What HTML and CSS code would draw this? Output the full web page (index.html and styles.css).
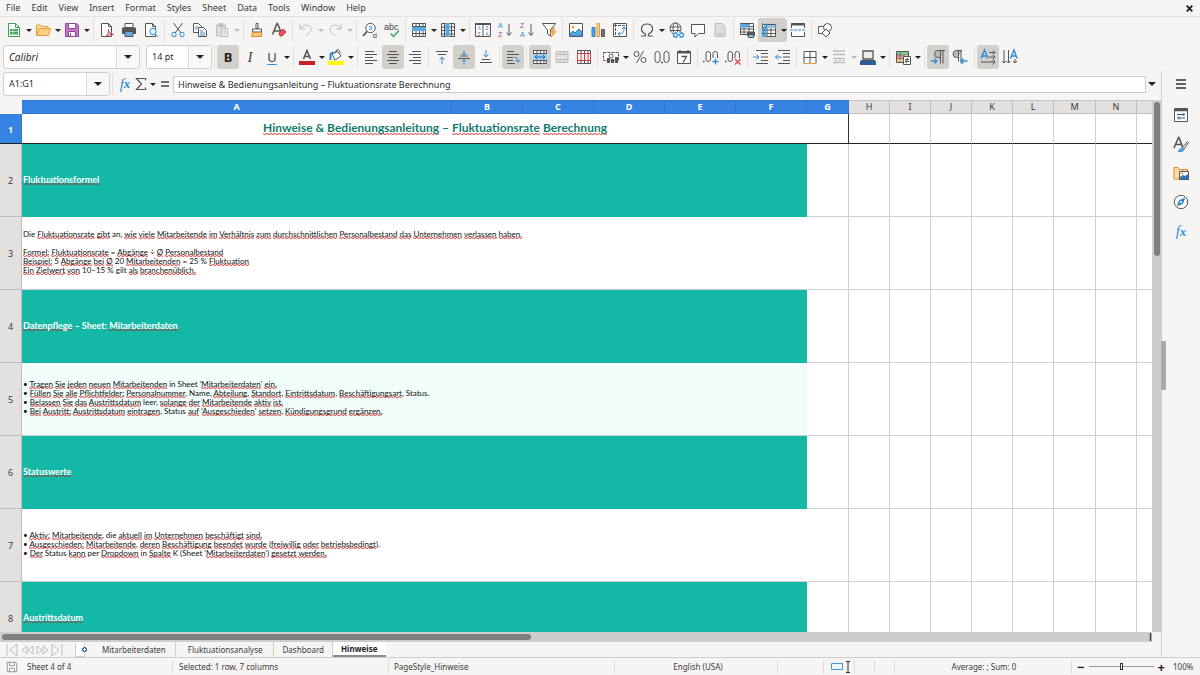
FILE: index.html
```html
<!DOCTYPE html>
<html lang="en">
<head>
<meta charset="utf-8">
<title>Hinweise – Spreadsheet</title>
<link rel="stylesheet" href="styles.css">
</head>
<body>
<header class="chrome">
  <nav class="menubar" aria-label="Menu bar">
    <button>File</button><button>Edit</button><button>View</button><button>Insert</button><button>Format</button><button>Styles</button><button>Sheet</button><button>Data</button><button>Tools</button><button>Window</button><button>Help</button>
    <button class="close" aria-label="Close document"><svg class="x" viewBox="0 0 8 8"><path d="M1.5 1.5l5 5m0-5l-5 5" stroke="#222" stroke-width="1.7"/></svg></button>
  </nav>
  <div class="toolbar" role="toolbar" aria-label="Standard">
    <button class="tool" aria-label="New"><svg viewBox="0 0 16 16"><path d="M2.500 1.500h7l4 4v9h-11z" class="w" stroke="#3a9d55"/><path d="M9.500 1.500v4h4" stroke="#3a9d55"/><rect x="4" y="7" width="8" height="5.500" fill="#42a85c"/><path d="M4 9.500h8M7 7v5.500" stroke="#fff" stroke-width=".6"/></svg></button><button class="drop" aria-label="New options"></button>
    <button class="tool" aria-label="Open"><svg viewBox="0 0 16 16"><path d="M1.500 13V3h4l1.500 1.500h6V6" fill="#fbe0a8" stroke="#e59a3c"/><path d="M1.500 13.500L4 6.500h11.500l-2 7z" fill="#fdcf85" stroke="#e59a3c"/></svg></button><button class="drop" aria-label="Open options"></button>
    <button class="tool" aria-label="Save"><svg viewBox="0 0 16 16"><path d="M1.500 1.500h11l2 2v11h-13z" fill="#c678cd" stroke="#93469f"/><path d="M4.500 1.500h7v5h-7zM4.500 9.500h7v5h-7z" class="w" stroke="#93469f"/><path d="M6.500 11v3" stroke="#93469f"/></svg></button><button class="drop" aria-label="Save options"></button>
    <span class="sep after"></span>
    <button class="tool" aria-label="Export as PDF"><svg viewBox="0 0 16 16"><path d="M2.500 1.500h7l3 3v10h-10z" class="w g"/><path d="M9.500 1.500v3h3" class="g"/><path d="M7 14.500c2-2 3-5 2.500-7 0 3 2 5 5 5-3-.5-5 .5-7.500 2z" stroke="#d73545" fill="#fff"/></svg></button>
    <button class="tool" aria-label="Print"><svg viewBox="0 0 16 16"><path d="M4 1.500h8v4H4z" class="w g"/><path d="M1 5.500h14v6.500H1z" fill="#555"/><path d="M4 9.500h8v5H4z" fill="#65a9df" stroke="#555"/></svg></button>
    <button class="tool" aria-label="Print Preview"><svg viewBox="0 0 16 16"><path d="M2.500 1.500h7l3 3v10h-10z" class="w g"/><path d="M9.500 1.500v3h3" class="g"/><circle cx="10" cy="9.500" r="3.200" fill="#e8f3fb" class="b"/><path d="M12 12l3 3" class="b"/></svg></button>
    <span class="sep"></span>
    <button class="tool" aria-label="Cut"><svg viewBox="0 0 16 16"><path d="M3.500 1l7.500 10M12.500 1L5 11" class="g"/><circle cx="4" cy="12.500" r="2.200" class="b"/><circle cx="12" cy="12.500" r="2.200" class="b"/></svg></button>
    <button class="tool" aria-label="Copy"><svg viewBox="0 0 16 16"><path d="M1.500 1.500h5l3 3v6h-8z" class="w g"/><path d="M6.500 5.500h5l3 3v6h-8z" class="w g"/><path d="M3 5h3M3 7h2M8 9h3M8 11h5M8 13h5" class="b"/></svg></button>
    <button class="tool" aria-label="Paste"><svg viewBox="0 0 16 16"><path d="M2.500 3h9v11h-9z" fill="#ddd" class="l"/><path d="M5 1.500h4v3H5z" fill="#bbb" class="l"/><path d="M7.500 6.500h6v8h-6z" fill="#eee" class="l"/><path d="M9 9h3M9 11h3" class="l"/></svg></button><button class="drop off" aria-label="Paste options"></button>
    <span class="sep after"></span>
    <button class="tool" aria-label="Clone Formatting"><svg viewBox="0 0 16 16"><path d="M7 1.500h2v5H7zM3.500 7h9v3h-9z" class="w g"/><path d="M3.500 10.500h9v4h-10z" fill="#fbc684" stroke="#e58a2c"/></svg></button>
    <button class="tool" aria-label="Clear Direct Formatting"><svg viewBox="0 0 16 16"><path d="M1.500 12.500l4.500-11h.5l4.500 11M3 9h6" class="g" stroke-width="1.500"/><path d="M8 11l4-4 3 3-4 4H9z" fill="#e9545f" stroke="#d73545"/></svg></button>
    <span class="sep"></span>
    <button class="tool" aria-label="Undo"><svg viewBox="0 0 16 16"><path d="M2 2v5h5M2.500 6.500C5 2 12 2 13 6.500c.5 3-3 5.500-5.500 7.500" class="l"/></svg></button><button class="drop off" aria-label="Undo list"></button>
    <button class="tool" aria-label="Redo"><svg viewBox="0 0 16 16"><path d="M14 2v5H9M13.500 6.500C11 2 4 2 3 6.500c-.5 3 3 5.500 5.500 7.500" class="l"/></svg></button><button class="drop off" aria-label="Redo list"></button>
    <span class="sep after"></span>
    <button class="tool" aria-label="Find and Replace"><svg viewBox="0 0 16 16"><circle cx="8.500" cy="6" r="4.700" class="w g"/><path d="M5 9.500L1 14" class="g" stroke-width="1.800"/><text x="6.500" y="7.500" class="tb" font-size="7">a</text><text x="10.500" y="15.500" class="tg" font-size="8">d</text></svg></button>
    <button class="tool" aria-label="Spelling"><svg viewBox="0 0 16 16"><text x="0" y="7.500" class="tg" font-size="9">abc</text><path d="M6.500 11.500l3 3 5.500-6" stroke="#35a85a" stroke-width="1.500"/></svg></button>
    <span class="sep"></span>
    <button class="tool" aria-label="Row"><svg viewBox="0 0 16 16"><path d="M1.500 1.500h13v13h-13zM1.500 4.500h13M1.500 11.500h13M5 1.500v13M8.500 1.500v13M12 1.500v13" class="w g"/><path d="M1 5h14v4H1z" fill="#5ba8e0"/></svg></button><button class="drop" aria-label="Row options"></button>
    <button class="tool" aria-label="Column"><svg viewBox="0 0 16 16"><path d="M1.500 1.500h13v13h-13zM4.500 1.500v13M11.500 1.500v13M1.500 5h13M1.500 8.500h13M1.500 12h13" class="w g"/><path d="M5.500 1h4v14h-4z" fill="#5ba8e0"/></svg></button><button class="drop" aria-label="Column options"></button>
    <span class="sep after"></span>
    <button class="tool" aria-label="Sort"><svg viewBox="0 0 16 16"><path d="M.5 1.500h15v13H.5zM8 3v12" class="w g"/><path d="M0 1h16v2H0z" fill="#555"/><text x="2.500" y="8" class="tb" font-size="5">A</text><text x="2.500" y="14" class="tp" font-size="5">Z</text><text x="10.500" y="8" class="tp" font-size="5">Z</text><text x="10.500" y="14" class="tb" font-size="5">A</text></svg></button>
    <button class="tool" aria-label="Sort Ascending"><svg viewBox="0 0 16 16"><text x="1" y="6" class="tb" font-size="7">A</text><text x="1" y="15" class="tp" font-size="7">Z</text><path d="M12 2v11M9.500 10.500L12 13.500l2.500-3" class="g"/></svg></button>
    <button class="tool" aria-label="Sort Descending"><svg viewBox="0 0 16 16"><text x="1" y="6" class="tp" font-size="7">Z</text><text x="1" y="15" class="tb" font-size="7">A</text><path d="M12 2v11M9.500 10.500L12 13.500l2.500-3" class="g"/></svg></button>
    <button class="tool" aria-label="AutoFilter"><svg viewBox="0 0 16 16"><path d="M1.500 1.500h13L9.500 8v6l-3-2V8z" class="w g"/><path d="M12 6l-3 5h3l-2 4.500 5-6h-3l2-3.500z" fill="#fbb45c" stroke="#e58a2c" stroke-width=".6"/></svg></button>
    <span class="sep"></span>
    <button class="tool" aria-label="Insert Image"><svg viewBox="0 0 16 16"><path d="M1.500 1.500h13v13h-13z" class="w g"/><circle cx="5" cy="5" r="1.500" fill="#f6a546"/><path d="M2 14v-2l3-3 2 2 4-4 3 3v4z" fill="#5ba8e0" stroke="#2b78bd"/></svg></button>
    <button class="tool" aria-label="Insert Chart"><svg viewBox="0 0 16 16"><path d="M2 5.500h3v9H2z" fill="#5ba8e0" stroke="#2b78bd"/><path d="M7 1.500h2.500v13H7z" fill="#fdcf85" stroke="#e59a3c"/><path d="M11.500 7.500h3v7h-3z" fill="#777" class="g"/></svg></button>
    <button class="tool" aria-label="Insert Pivot Table"><svg viewBox="0 0 16 16"><path d="M1.500 1.500h13v13h-13z" class="w g"/><path d="M2 3.500h12M3.500 2v12" class="g" stroke-dasharray="3 1"/><path d="M6 12c5 0 6-2 6-6M10 7l2-2 2 2M8 10l-2 2 2 2" class="b"/></svg></button>
    <span class="sep"></span>
    <button class="tool" aria-label="Special Character"><svg viewBox="0 0 16 16"><path d="M2 14h4.500v-2C0 9 2 2 8 2s8 7 1.500 10v2H14" class="g" stroke-width="1.200"/></svg></button><button class="drop" aria-label="Recent characters"></button>
    <button class="tool" aria-label="Hyperlink"><svg viewBox="0 0 16 16"><circle cx="7.500" cy="6.500" r="5.500" class="w g"/><ellipse cx="7.500" cy="6.500" rx="2.500" ry="5.500" class="g"/><path d="M2 5h11M2 8.500h11" class="g"/><path d="M5 10h11v6H5z" fill="#f6f5f4"/><path d="M9.500 11h-2a2 2 0 0 0 0 4h2M11.500 11h2a2 2 0 0 1 0 4h-2M8.500 13h4" class="b" stroke-width="1.300"/></svg></button>
    <button class="tool" aria-label="Comment"><svg viewBox="0 0 16 16"><path d="M1.500 2.500h13v9h-6L5 15v-3.500H1.500z" class="w g"/></svg></button>
    <button class="tool" aria-label="Headers and Footers"><svg viewBox="0 0 16 16"><path d="M3 1.500h7l3 3v10H3z" fill="#ddd" class="l"/><path d="M5 12h6" class="l"/></svg></button>
    <span class="sep"></span>
    <button class="tool" aria-label="Define Print Area"><svg viewBox="0 0 16 16"><path d="M1.500 1.500h13v11h-13zM1.500 4.500h13M1.500 7h13M1.500 10h13M5 1.500v11M10 1.500v11" class="w g"/><path d="M1 2h10v3.500H1z" fill="#5ba8e0"/><path d="M8 10h8v4H8z" fill="#555"/><path d="M9.500 12.500h5v3h-5z" fill="#8cc3ec" class="g"/></svg></button>
    <span class="pair"><button class="tool" aria-label="Freeze Rows and Columns" aria-pressed="true"><svg viewBox="0 0 16 16"><path d="M1.500 2.500h13v12h-13zM6 4.500v10M10 4.500v10M1.500 8h13M1.500 11.500h13" class="w g"/><path d="M5 3h9.500v3H5z" fill="#8cc3ec"/><path d="M1 6h4v9H1z" fill="#5ba8e0"/><path d="M1 1l4.500 4.500M5.500 1.500v4h-4" class="b"/><path d="M1 8h3M1 11.500h3" class="d"/></svg></button><button class="drop" aria-label="Freeze options"></button></span>
    <button class="tool" aria-label="Split Window"><svg viewBox="0 0 16 16"><path d="M1.500 6V1.500h13V6M1.500 10v4.500h13V10" class="w g"/><path d="M1 2.500h14" class="g" stroke-width="2"/><path d="M0 8h16" class="b" stroke-dasharray="3 1"/></svg></button>
    <span class="sep"></span>
    <button class="tool" aria-label="Show Draw Functions"><svg viewBox="0 0 16 16"><path d="M1.500 4.500h7v7h-7z" class="w g"/><circle cx="10.500" cy="5.500" r="4" class="w g"/><path d="M9 7l4 4-4 4-4-4z" class="w g"/></svg></button>
  </div>
  <div class="toolbar" role="toolbar" aria-label="Formatting">
    <span class="combo font"><input class="italic" aria-label="Font Name" value="Calibri"><button aria-label="Font list"></button></span>
    <span class="combo size"><input aria-label="Font Size" value="14 pt"><button aria-label="Size list"></button></span>
    <span class="sep"></span>
    <button class="tool glyph bold" aria-pressed="true">B</button><button class="tool glyph it">I</button><button class="tool glyph un">U</button><button class="drop" aria-label="Underline styles"></button>
    <span class="sep after"></span>
    <button class="tool" aria-label="Font Color"><svg viewBox="0 0 16 16"><path d="M4.500 10L8 1.500 11.500 10M5.500 7.500h5" class="g" stroke-width="1.600"/><path d="M0 12h16v4H0z" fill="#c9211e"/></svg></button><button class="drop" aria-label="Font colors"></button>
    <button class="tool" aria-label="Background Color"><svg viewBox="0 0 16 16"><path d="M4 5l5-3 4 5-6 4z" class="w g"/><path d="M8 4V1.500c3-2 4 0 4 3" class="g"/><path d="M2.500 11V5c1-2 3-1 4-1" class="b" stroke-width="2"/><path d="M0 12h16v4H0z" fill="#ffff00"/></svg></button><button class="drop" aria-label="Background colors"></button>
    <span class="sep after"></span>
    <button class="tool" aria-label="Align Left"><svg viewBox="0 0 16 16"><path d="M2 2.500h9M2 5.500h12M2 8.500h8M2 11.500h12M2 14.500h8" class="g"/></svg></button>
    <button class="tool" aria-label="Center Horizontally" aria-pressed="true"><svg viewBox="0 0 16 16"><path d="M4 2.500h8M2 5.500h12M4 8.500h8M2 11.500h12M4 14.500h8" class="g"/></svg></button>
    <button class="tool" aria-label="Align Right"><svg viewBox="0 0 16 16"><path d="M5 2.500h9M2 5.500h12M6 8.500h8M2 11.500h12M6 14.500h8" class="g"/></svg></button>
    <span class="sep"></span>
    <button class="tool" aria-label="Align Top"><svg viewBox="0 0 16 16"><path d="M2 2.500h12M4 5.500h8" class="g"/><path d="M8 15V8M5.500 10.500L8 8l2.500 2.500" class="b"/></svg></button>
    <button class="tool" aria-label="Center Vertically" aria-pressed="true"><svg viewBox="0 0 16 16"><path d="M4 7h8M2 9.500h12" class="g"/><path d="M8 1v5M6 4l2 2 2-2M8 15.500v-5M6 12.500l2-2 2 2" class="b"/></svg></button>
    <button class="tool" aria-label="Align Bottom"><svg viewBox="0 0 16 16"><path d="M4 10.500h8M2 13.500h12" class="g"/><path d="M8 1v7M5.500 5.500L8 8l2.500-2.500" class="b"/></svg></button>
    <span class="sep"></span>
    <button class="tool" aria-label="Wrap Text" aria-pressed="true"><svg viewBox="0 0 16 16"><path d="M2 2.500h7M2 5.500h12M2 8.500h6M2 11.500h6M2 14.500h8" class="g"/><path d="M9 8.500c3 0 4 1 4 4M10.500 11l2.500 2.500 2-2.500" class="b"/></svg></button>
    <span class="sep"></span>
    <button class="tool" aria-label="Merge and Center Cells" aria-pressed="true"><svg viewBox="0 0 16 16"><path d="M1.500 1.500h13v13h-13zM1.500 4.500h13M1.500 11.500h13M5 1.500v3M8.500 1.500v3M12 1.500v3M5 11.500v3M8.500 11.500v3M12 11.500v3" class="w g"/><path d="M1 5h14v6H1z" fill="#9ccbee"/><path d="M3 8h10M5 6L3 8l2 2M11 6l2 2-2 2" class="d"/></svg></button>
    <button class="tool" aria-label="Merge Cells" disabled><svg viewBox="0 0 16 16"><path d="M2 2.500h12v11H2zM2 5.500h12M2 10.500h12M6 2.500v3M10 2.500v3M6 10.500v3M10 10.500v3" fill="#e4e4e3" class="l"/></svg></button>
    <button class="tool" aria-label="Unmerge Cells"><svg viewBox="0 0 16 16"><path d="M1.500 1.500h13v13h-13zM5 1.500v3M8.500 1.500v3M12 1.500v3M5 11.500v3M8.500 11.500v3M12 11.500v3" class="w g"/><path d="M1.500 4.500h13v7h-13zM5 4.500v7M8.500 4.500v7M12 4.500v7" stroke="#d73545"/></svg></button>
    <span class="sep"></span>
    <button class="tool" aria-label="Format as Currency"><svg viewBox="0 0 16 16"><path d="M.5 3.500h15v8H.5z" class="w g" stroke-dasharray="3 1"/><circle cx="8" cy="7" r="2" class="g"/><path d="M4 9h3v5H4zM8 10h3v4H8zM12 8h3v6h-3z" fill="#555"/></svg></button><button class="drop" aria-label="Currency list"></button>
    <button class="tool" aria-label="Format as Percent"><svg viewBox="0 0 16 16"><circle cx="4.500" cy="5" r="2.500" class="g"/><circle cx="11.500" cy="11" r="2.500" class="g"/><path d="M11.500 2L4.500 14" class="g"/></svg></button>
    <button class="tool" aria-label="Format as Number"><svg viewBox="0 0 16 16"><rect x="1" y="2.500" width="5" height="11" rx="2.500" class="g"/><rect x="10" y="2.500" width="5" height="11" rx="2.500" class="g"/><path d="M7.500 13h1v1h-1z" class="g"/></svg></button>
    <button class="tool" aria-label="Format as Date"><svg viewBox="0 0 16 16"><path d="M1.500 2.500h13v12h-13z" class="w g"/><path d="M1 3.500h14" class="g" stroke-width="2"/><path d="M4 1v3M12 1v3M5.500 7.500h5L7 13.500" class="g" stroke-width="1.300"/></svg></button>
    <span class="sep"></span>
    <button class="tool" aria-label="Add Decimal Place"><svg viewBox="0 0 16 16"><path d="M0 12.500h1.500" class="g" stroke-width="1.500"/><rect x="3" y="2.500" width="4.500" height="10" rx="2.200" class="g"/><rect x="10" y="2.500" width="4.500" height="10" rx="2.200" class="g"/><path d="M9 9h7v7H9z" fill="#f6f5f4"/><path d="M9.500 12.500h6M12.500 9.500v6" class="b" stroke-width="1.300"/></svg></button>
    <button class="tool" aria-label="Delete Decimal Place"><svg viewBox="0 0 16 16"><path d="M0 12.500h1.500" class="g" stroke-width="1.500"/><rect x="3" y="2.500" width="4.500" height="10" rx="2.200" class="g"/><rect x="10" y="2.500" width="4.500" height="10" rx="2.200" class="g"/><path d="M9 9h7v7H9z" fill="#f6f5f4"/><path d="M10 10l5.500 5.500m0-5.500L10 15.500" stroke="#e0404a" stroke-width="1.300"/></svg></button>
    <span class="sep after"></span>
    <button class="tool" aria-label="Increase Indent"><svg viewBox="0 0 16 16"><path d="M3 1.500h12M8 4.500h7M8 8h7M8 11.500h7M3 14.500h12" class="g"/><path d="M0 8h6M3.500 5.500L6 8l-2.500 2.500" class="b"/></svg></button>
    <button class="tool" aria-label="Decrease Indent"><svg viewBox="0 0 16 16"><path d="M3 1.500h12M8 4.500h7M8 8h7M8 11.500h7M3 14.500h12" class="g"/><path d="M6.500 8h-6M3 5.500L.5 8 3 10.500" class="b"/></svg></button>
    <span class="sep"></span>
    <button class="tool" aria-label="Borders"><svg viewBox="0 0 16 16"><path d="M2 2.500h12v12H2zM8 2.500v12M2 8.500h12" class="w g"/><path d="M2 14.500h12" stroke="#e59a3c"/></svg></button><button class="drop" aria-label="Border list"></button>
    <button class="tool" aria-label="Border Style" disabled><svg viewBox="0 0 16 16"><path d="M2 2h12M2 5.500h12M2 9.500h12M2 13.500h12" class="l" stroke-width="1.300"/><path d="M4 11.500h2m2 0h2m2 0h2" class="l"/></svg></button><button class="drop off" aria-label="Border styles"></button>
    <button class="tool" aria-label="Border Color"><svg viewBox="0 0 16 16"><path d="M3 2h10v8H3z" fill="#eee" class="g" stroke-width="1.300"/><path d="M1 11.500h14" class="g"/><path d="M0 12h16v4H0z" fill="#2a6099"/></svg></button><button class="drop" aria-label="Border colors"></button>
    <span class="sep after"></span>
    <button class="tool" aria-label="Conditional Formatting"><svg viewBox="0 0 16 16"><path d="M1.500 2.500h12v11h-12z" class="w g"/><path d="M2 3h11v3H2z" fill="#7ccb8f"/><path d="M2 6h8v3H2z" fill="#f09090"/><path d="M2 9h8v4H2z" fill="#fdcf85"/><path d="M1.500 6h12M1.500 9.500h12M5 2.500v11" class="g" stroke-width=".6"/><path d="M8.500 7.500h7v8h-7z" class="w g"/><path d="M10 10.500h4M10 12.500h4M13 9l-2 5" class="g"/></svg></button><button class="drop" aria-label="Conditional options"></button>
    <span class="sep after"></span>
    <button class="tool" aria-label="Left-To-Right" aria-pressed="true"><svg viewBox="0 0 16 16"><path d="M15 1.500H8a3 3 0 0 0 0 7h2M10.500 1.500v13M13 1.500v13" fill="#bbb" class="g"/><path d="M1 12h6M4.500 9.500L7 12l-2.500 2.500" class="b" stroke-width="1.300"/></svg></button>
    <button class="tool" aria-label="Right-To-Left"><svg viewBox="0 0 16 16"><path d="M10 1.500H4.500a3 3 0 0 0 0 7H6M6.500 1.500v11M9 1.500v13" fill="#bbb" class="g"/><path d="M15.500 12H9M11.500 9.500L9 12l2.500 2.500" class="b" stroke-width="1.300"/></svg></button>
    <span class="sep after"></span>
    <button class="tool" aria-label="Text direction from left to right" aria-pressed="true"><svg viewBox="0 0 16 16"><path d="M1 9.500L4.500 1 8 9.500M2.500 7h4" class="b" stroke-width="1.500"/><path d="M9 3.500h6M13 1.500l2 2-2 2M9 8h6M13 6l2 2-2 2M1 13h14M12.500 10.500L15 13l-2.500 2.500" class="g"/></svg></button>
    <button class="tool" aria-label="Text direction from top to bottom"><svg viewBox="0 0 16 16"><path d="M8.500 9.500L12 1l3 8.500M9.500 7h4" class="b" stroke-width="1.500"/><path d="M2 1v13M0 12l2 2 2-2M6.500 1v13M4.500 12l2 2 2-2M13 10v4M11 12l2 2 2-2" class="g"/></svg></button>
  </div>
</header>

<main class="work">
  <section class="document">
    <div class="formula-bar">
      <span class="combo name"><input aria-label="Name Box" value="A1:G1"><button aria-label="Named ranges"></button></span>
      <span class="sep"></span>
      <button class="fn fx" aria-label="Function Wizard">f<small>x</small></button>
      <button class="fn" aria-label="Select Function"><svg viewBox="0 0 12 14"><path d="M10.500 3.500v-2h-9l5 5.500-5 5.500h9v-2" class="g" stroke-width="1.200"/></svg></button><button class="drop" aria-label="Function list"></button>
      <button class="fn" aria-label="Formula"><svg viewBox="0 0 12 14"><path d="M2 5h8M2 9h8" stroke="#444" stroke-width="1.500"/></svg></button>
      <input class="formula" aria-label="Input line" value="Hinweise &amp; Bedienungsanleitung – Fluktuationsrate Berechnung">
      <button class="drop big" aria-label="Expand Formula Bar"></button>
    </div>
    <div class="grid-area">
      <div class="viewport">
        <table class="sheet">
          <colgroup><col class="c-row"><col class="c-a"><col class="c-b"><col class="c-b"><col class="c-b"><col class="c-b"><col class="c-b"><col class="c-g"><col class="c-h"><col class="c-h"><col class="c-h"><col class="c-h"><col class="c-h"><col class="c-g"><col class="c-h"><col></colgroup>
          <thead>
            <tr><td class="corner"></td><th class="on">A</th><th class="on">B</th><th class="on">C</th><th class="on">D</th><th class="on">E</th><th class="on">F</th><th class="on">G</th><th>H</th><th>I</th><th>J</th><th>K</th><th>L</th><th>M</th><th>N</th><th></th></tr>
          </thead>
          <tbody>
            <tr class="first"><th class="on">1</th><td class="title" colspan="7"><u>Hinweise</u> &amp; <u>Bedienungsanleitung</u> – <u>Fluktuationsrate</u> <u>Berechnung</u></td><td></td><td></td><td></td><td></td><td></td><td></td><td></td><td></td></tr>
            <tr><th>2</th><td class="head" colspan="6"><u>Fluktuationsformel</u></td><td></td><td></td><td></td><td></td><td></td><td></td><td></td><td></td><td></td></tr>
            <tr><th>3</th><td class="body" colspan="6">Die <u>Fluktuationsrate</u> <u>gibt</u> an, <u>wie</u> <u>viele</u> <u>Mitarbeitende</u> <u>im</u> <u>Verhältnis</u> <u>zum</u> <u>durchschnittlichen</u> <u>Personalbestand</u> <u>das</u> <u>Unternehmen</u> <u>verlassen</u> <u>haben.</u><br><br><u>Formel:</u> <u>Fluktuationsrate</u> = <u>Abgänge</u> ÷ <u>Ø</u> <u>Personalbestand</u><br><u>Beispiel:</u> 5 <u>Abgänge</u> <u>bei</u> <u>Ø</u> 20 <u>Mitarbeitenden</u> = 25 % <u>Fluktuation</u><br><u>Ein</u> <u>Zielwert</u> <u>von</u> 10–15 % gilt <u>als</u> <u>branchenüblich.</u></td><td></td><td></td><td></td><td></td><td></td><td></td><td></td><td></td><td></td></tr>
            <tr><th>4</th><td class="head" colspan="6"><u>Datenpflege</u> – Sheet: <u>Mitarbeiterdaten</u></td><td></td><td></td><td></td><td></td><td></td><td></td><td></td><td></td><td></td></tr>
            <tr><th>5</th><td class="body tint" colspan="6">• <u>Tragen</u> <u>Sie</u> <u>jeden</u> <u>neuen</u> <u>Mitarbeitenden</u> in Sheet '<u>Mitarbeiterdaten</u>' <u>ein.</u><br>• <u>Füllen</u> <u>Sie</u> <u>alle</u> <u>Pflichtfelder:</u> <u>Personalnummer</u>, Name, <u>Abteilung</u>, <u>Standort</u>, <u>Eintrittsdatum</u>, <u>Beschäftigungsart</u>, Status.<br>• <u>Belassen</u> <u>Sie</u> <u>das</u> <u>Austrittsdatum</u> leer, <u>solange</u> <u>der</u> <u>Mitarbeitende</u> <u>aktiv</u> <u>ist.</u><br>• <u>Bei</u> <u>Austritt:</u> <u>Austrittsdatum</u> <u>eintragen</u>, Status <u>auf</u> '<u>Ausgeschieden</u>' <u>setzen</u>, <u>Kündigungsgrund</u> <u>ergänzen.</u></td><td></td><td></td><td></td><td></td><td></td><td></td><td></td><td></td><td></td></tr>
            <tr><th>6</th><td class="head" colspan="6"><u>Statuswerte</u></td><td></td><td></td><td></td><td></td><td></td><td></td><td></td><td></td><td></td></tr>
            <tr><th>7</th><td class="body" colspan="6">• <u>Aktiv:</u> <u>Mitarbeitende</u>, die <u>aktuell</u> <u>im</u> <u>Unternehmen</u> <u>beschäftigt</u> <u>sind.</u><br>• <u>Ausgeschieden:</u> <u>Mitarbeitende</u>, <u>deren</u> <u>Beschäftigung</u> <u>beendet</u> <u>wurde</u> (<u>freiwillig</u> <u>oder</u> <u>betriebsbedingt</u>).<br>• <u>Der</u> Status <u>kann</u> per <u>Dropdown</u> in <u>Spalte</u> K (Sheet '<u>Mitarbeiterdaten</u>') <u>gesetzt</u> <u>werden.</u></td><td></td><td></td><td></td><td></td><td></td><td></td><td></td><td></td><td></td></tr>
            <tr><th>8</th><td class="head" colspan="6"><u>Austrittsdatum</u></td><td></td><td></td><td></td><td></td><td></td><td></td><td></td><td></td><td></td></tr>
          </tbody>
        </table>
      </div>
      <div class="vscroll"><div class="thumb"></div></div>
    </div>
    <div class="hscroll"><div class="thumb"></div><div class="grip"></div></div>
    <nav class="tabs" aria-label="Sheets">
      <button class="nav" aria-label="First sheet"><svg viewBox="0 0 14 14"><path d="M2 1v12M12 1L5 7l7 6z" class="l"/></svg></button>
      <button class="nav" aria-label="Previous sheet"><svg viewBox="0 0 14 14"><path d="M7 3L2 7l5 4zM13 3L8 7l5 4z" class="l"/></svg></button>
      <button class="nav" aria-label="Next sheet"><svg viewBox="0 0 14 14"><path d="M2 3l5 4-5 4zM8 3l5 4-5 4z" class="l"/></svg></button>
      <button class="nav" aria-label="Last sheet"><svg viewBox="0 0 14 14"><path d="M12 1v12M2 1l7 6-7 6z" class="l"/></svg></button>
      <button class="nav add" aria-label="Add sheet"><svg viewBox="0 0 14 14"><path d="M1.500 0v13.500h9V0" class="w" stroke="#ccc"/><circle cx="10.500" cy="6.500" r="2.500" fill="#2a6099"/><path d="M9 6.500h3M10.500 5v3" stroke="#fff"/></svg></button>
      <button class="tab">Mitarbeiterdaten</button><button class="tab">Fluktuationsanalyse</button><button class="tab">Dashboard</button><button class="tab active">Hinweise</button>
    </nav>
  </section>
  <aside class="sidebar" aria-label="Sidebar">
    <div class="handle"></div>
    <button class="settings" aria-label="Sidebar Settings"><svg viewBox="0 0 16 16"><path d="M3 4h10M3 8h10M3 12h10" stroke="#333" stroke-width="1.500"/></svg></button>
    <button aria-label="Properties"><svg viewBox="0 0 16 16"><path d="M1.500 1.500h13v13h-13z" class="w g"/><path d="M1 3h14" class="g" stroke-width="2.500"/><path d="M4 7.500h8M4 11h8" class="g"/><path d="M10.500 6v3M6 9.500v3" class="b" stroke-width="1.500"/></svg></button>
    <button aria-label="Styles"><svg viewBox="0 0 16 16"><path d="M1 12L5.500 1.500H6L10 12M2.500 8.500h6.500" class="g" stroke-width="1.600"/><path d="M14.500 5.500l-5 6 1.500 1.500 4.500-6.500z" class="w g"/><path d="M9.500 11.500c-2 0-2 3-4.500 3.500 3 1.500 6 0 6-2z" fill="#5ba8e0" class="b"/></svg></button>
    <button aria-label="Gallery"><svg viewBox="0 0 16 16"><path d="M1 14V2.500h4l1.500 2h8V14z" fill="#fbd9a0" stroke="#e58a2c"/><path d="M6.500 6.500h9v8h-9z" class="w g"/><path d="M7 14v-2l3-2 2 1 3-2v5z" fill="#2b78bd"/><circle cx="9" cy="8.500" r="1" fill="#e58a2c"/></svg></button>
    <button aria-label="Navigator"><svg viewBox="0 0 16 16"><circle cx="8" cy="8" r="6.700" class="w g"/><path d="M11.500 4.500L9.500 9.500 4.500 11.500 6.500 6.500z" fill="#3d94d6" stroke="#2b78bd"/><circle cx="8" cy="8" r="1" fill="#fff"/></svg></button>
    <button class="fx" aria-label="Functions">f<small>x</small></button>
  </aside>
</main>

<footer class="status">
  <span class="cell s-save"><svg viewBox="0 0 14 14"><path d="M1.500 1.500h10l1 1v10h-11zM4 1.500v4h6v-4M4 12.500v-4h6v4" class="w" stroke="#888"/></svg></span>
  <span class="cell s-sheet">Sheet 4 of 4</span>
  <span class="cell s-sel">Selected: 1 row, 7 columns</span>
  <span class="cell s-page">PageStyle_Hinweise</span>
  <span class="cell s-lang">English (USA)</span>
  <span class="cell s-gap"></span>
  <span class="cell s-mode"><svg viewBox="0 0 20 12"><path d="M.5 2.500h11v6H.5z" stroke="#4a96d2" fill="#eef6fc"/><path d="M15 .5h4M17 .5v11M15 11.500h4" stroke="#333"/></svg></span>
  <span class="cell s-mini"></span>
  <span class="cell s-mini"></span>
  <span class="cell s-sum">Average: ; Sum: 0</span>
  <span class="cell s-zoom"><button aria-label="Zoom out">−</button><input type="range" aria-label="Zoom" min="0" max="100" value="50"><button aria-label="Zoom in">+</button></span>
  <span class="s-pct">100%</span>
</footer>
</body>
</html>
```
FILE: styles.css
```css
* { box-sizing: border-box; }

body {
  margin: 0;
  height: 100vh;
  display: flex;
  flex-direction: column;
  overflow: hidden;
  background: #f6f5f4;
  color: #3b3b3b;
  font: 9px/12px "Noto Sans", sans-serif;
}

button {
  margin: 0;
  padding: 0;
  border: 0;
  background: none;
  color: inherit;
  font: inherit;
}

input {
  min-width: 0;
  margin: 0;
  border: 0;
  background: none;
  color: #2b2b2b;
  font: inherit;
}

svg { display: block; fill: none; overflow: visible; }
svg text { font-family: "Liberation Sans", sans-serif; }

/* icon strokes */
.g { stroke: #555; }
.b { stroke: #2f8ed6; }
.d { stroke: #1d6cab; }
.l { stroke: #bdbdbd; }
.w { fill: #fff; }
.tb { fill: #2f8ed6; }
.tp { fill: #a33fb0; }
.tg { fill: #444; }

/* menu */
.menubar {
  display: flex;
  align-items: center;
  gap: 11px;
  height: 17px;
  padding: 0 6px;
  border-bottom: 1px solid #e4e2e0;
}

.close { margin-left: auto; }
.x { width: 9px; height: 9px; }

/* toolbars */
.toolbar {
  display: flex;
  align-items: center;
  height: 27px;
  padding: 0 0 1px 3px;
}

.tool {
  display: flex;
  align-items: center;
  justify-content: center;
  width: 22px;
  height: 24px;
  border-radius: 3px;
  flex: none;
}

.tool svg { width: 16px; height: 16px; }
[aria-pressed="true"], .pair { background: #d3cfcb; }
.pair { display: flex; border-radius: 3px; }

.glyph { color: #444; font-size: 13px; }
.bold { font-weight: 700; color: #222; }
.it { font-family: "Liberation Serif", serif; font-style: italic; font-size: 15px; }
.un { text-decoration: underline #2f8ed6; text-underline-offset: 2px; }

.drop {
  display: flex;
  align-items: center;
  justify-content: center;
  width: 7px;
  height: 24px;
  flex: none;
}

.drop::before, .combo button::before {
  content: "";
  border: 3px solid transparent;
  border-top: 3px solid #222;
  border-bottom: 0;
}

.drop.off::before { border-top-color: #bbb; }

.drop.big::before, .combo button::before {
  border-width: 4px 4px 0;
}

.sep {
  width: 5px;
  height: 22px;
  flex: none;
  background: linear-gradient(#e3e1df, #e3e1df) center / 1px 100% no-repeat;
}

.sep.after { width: 6px; }

.combo {
  display: flex;
  height: 24px;
  border: 1px solid #d2cecb;
  border-radius: 3px;
  background: #fff;
  overflow: hidden;
  flex: none;
}

.combo input { flex: 1; padding: 0 5px; }

.combo button {
  display: flex;
  align-items: center;
  justify-content: center;
  width: 23px;
  border-left: 1px solid #dedbd8;
  background: #f9f8f7;
}

.combo.font { width: 137px; margin-right: 6px; }
.combo.size { width: 66px; }
.combo.name { width: 107px; }
.combo .italic { font-size: 10px; font-style: italic; }

/* work area */
.work { display: flex; flex: 1; min-height: 0; }

.document {
  display: flex;
  flex-direction: column;
  flex: 1;
  min-width: 0;
}

.formula-bar {
  display: flex;
  align-items: center;
  height: 29px;
  padding: 0 5px 3px 3px;
}

.formula-bar .drop.big { width: 9px; margin-left: 1px; }
.formula-bar .sep { margin-right: 2px; }

.fn {
  display: flex;
  align-items: center;
  justify-content: center;
  width: 16px;
  height: 22px;
}

.formula-bar .drop + .fn { width: 17px; }
.fn svg { width: 12px; height: 14px; }

.fx {
  color: #2f8ed6;
  font: italic 15px/16px "Liberation Serif", serif;
}

.fx small { font-size: 13px; font-weight: 700; }

.formula {
  flex: 1;
  height: 17px;
  padding: 0 4px;
  border: 1px solid #cfccc9;
  background: #fff;
}

.grid-area { display: flex; flex: 1; min-height: 0; }

.viewport {
  flex: 1;
  min-width: 0;
  overflow: hidden;
  background: #fff;
}

.sheet {
  width: 100%;
  table-layout: fixed;
  border-collapse: separate;
  border-spacing: 0;
}

.c-row { width: 22px; }
.c-a { width: 430px; }
.c-b { width: 71px; }
.c-g { width: 42px; }
.c-h { width: 41px; }

.sheet th, .sheet td {
  padding: 0;
  border: 0 solid #cfcfcf;
  border-width: 0 1px 1px 0;
}

.sheet tr > :last-child { border-right: 0; }

.sheet th {
  background: #e2e1e0;
  border-color: #bfbebd;
  font-weight: 400;
}

.sheet thead th { height: 14px; line-height: 12px; border-top: 1px solid #c4c3c2; }
.sheet tbody th { padding-top: 2px; }

.sheet .on {
  background: #3584e4;
  border-color: #2f76cc;
  color: #fff;
  font-weight: 700;
}

.sheet .corner { background: #f6f5f4; border-color: #f6f5f4; }

.sheet tbody tr { height: 73px; }
.sheet tbody .first { height: 30px; }
.sheet .first td, .sheet .first .on { border-bottom-color: #222; }

.sheet .title {
  padding-bottom: 2px;
  border-right-color: #333;
  color: #147a6f;
  font: 700 12px/16px Lato, sans-serif;
  text-align: center;
}

.sheet .head {
  padding: 0 0 2px 1px;
  border-color: #14b8a6;
  background: #14b8a6;
  color: #fff;
  font: 700 9px/9px Lato, sans-serif;
}

.sheet .body {
  padding: 0 0 2px 1px;
  border-right-color: #fff;
  color: #111;
  font: 8px/9px Lato, sans-serif;
  white-space: nowrap;
}

.sheet .tint { background: #f0fdfa; border-right-color: #f0fdfa; }

/* spelling marks */
u {
  text-decoration: none;
  background: url("data:image/svg+xml,%3Csvg xmlns='http://www.w3.org/2000/svg' width='4' height='2'%3E%3Cpath d='M0 .5L2 1.500 4 .5' fill='none' stroke='%23d8403c'/%3E%3C/svg%3E") left bottom / 4px 2px repeat-x;
}

.head u {
  background-image: url("data:image/svg+xml,%3Csvg xmlns='http://www.w3.org/2000/svg' width='4' height='2'%3E%3Cpath d='M0 .5L2 1.500 4 .5' fill='none' stroke='%238a4a40'/%3E%3C/svg%3E");
}

/* scrollbars */
.vscroll {
  width: 9px;
  padding: 2px 1px 0 2px;
  background: #cdcdcc;
}

.vscroll .thumb {
  height: 29%;
  border-radius: 3px;
  background: #7d7f7e;
}

.hscroll {
  display: flex;
  align-items: center;
  justify-content: space-between;
  height: 10px;
  margin-right: 9px;
  padding-left: 2px;
  background: #cdcdcc;
}

.hscroll .thumb {
  width: 46%;
  height: 6px;
  border-radius: 3px;
  background: #7d7f7e;
}

.grip { width: 3px; height: 8px; background: #444; border-left: 1px solid #aaa; border-right: 1px solid #aaa; }

/* sheet tabs */
.tabs {
  display: flex;
  align-items: center;
  height: 15px;
  padding-left: 5px;
  font-size: 8px;
}

.nav { width: 15px; flex: none; }
.nav svg { width: 14px; height: 14px; }
.nav.add { margin: 0 3px 0 9px; }

.tab {
  height: 15px;
  padding: 0 9px 0 10px;
  border-right: 1px solid #cfccc9;
}

.tab + .tab { padding: 0 10px 0 12px; }
.tab:nth-last-child(2) { padding: 0 8px 0 9px; }

.tabs .tab.active {
  padding: 0 9px 0 8px;
  border-right: 0;
  border-bottom: 2px solid #8a8a8a;
  background: #fff;
  color: #222;
  font-weight: 700;
}

/* sidebar */
.sidebar {
  position: relative;
  display: flex;
  flex-direction: column;
  align-items: center;
  gap: 13px;
  width: 39px;
  padding-top: 5px;
  border-left: 1px solid #d2cfcc;
}

.sidebar button { width: 16px; height: 16px; }
.sidebar .settings { margin-bottom: 2px; }
.sidebar svg { width: 16px; height: 16px; }

.handle {
  position: absolute;
  top: 46%;
  left: -1px;
  width: 5px;
  height: 49px;
  border-radius: 1px;
  background: #aaa9a8;
}

/* status bar */
.status {
  display: flex;
  align-items: center;
  height: 18px;
  border-top: 1px solid #cfccc9;
  font-size: 8px;
}

.cell {
  display: flex;
  align-items: center;
  height: 13px;
  border-right: 1px solid #dedbd8;
}

.s-save { width: 22px; padding-left: 6px; border-right: 0; }
.s-save svg { width: 12px; height: 12px; }
.s-sheet { width: 151px; padding-left: 5px; }
.s-sel { width: 216px; padding-left: 6px; }
.s-page { flex: 1; padding-left: 5px; }
.s-lang { width: 163px; padding-left: 4px; justify-content: center; }
.s-gap { width: 46px; }
.s-mode { width: 31px; padding-left: 7px; }
.s-mode svg { width: 20px; height: 12px; }
.s-mini { width: 20px; }
.s-sum { width: 177px; padding-left: 2px; justify-content: center; }
.s-zoom { width: 96px; justify-content: space-between; padding: 0 3px 0 5px; border-right: 0; }
.s-zoom button { color: #222; font-size: 13px; font-weight: 700; }
.s-pct { width: 32px; padding-left: 5px; }

.s-zoom input {
  width: 65px;
  height: 10px;
  appearance: none;
  background: linear-gradient(#999, #999) center / 100% 1px no-repeat;
}

.s-zoom input::-webkit-slider-thumb {
  appearance: none;
  width: 3px;
  height: 7px;
  border: 1px solid #333;
  background: #fff;
}
```
